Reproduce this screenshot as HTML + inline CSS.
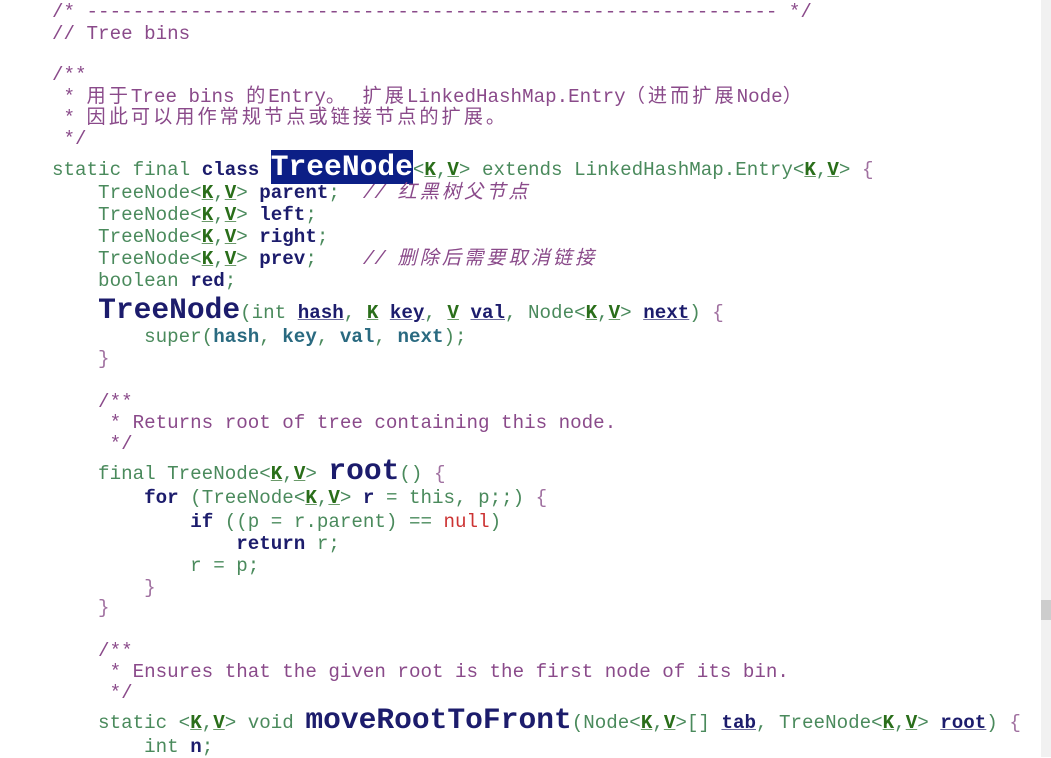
<!DOCTYPE html>
<html><head><meta charset="utf-8"><style>
html,body{margin:0;padding:0;background:#fff;}
body{width:1051px;height:757px;position:relative;overflow:hidden;font-family:"Liberation Mono","Noto Sans CJK SC",monospace;font-size:19.2px;}
.l{position:absolute;left:52px;height:22px;line-height:22px;white-space:pre;color:#4a8a5c;}
.c{color:#8a4a8a;}
.ci{color:#8a4a8a;font-style:italic;}
.z{font-family:"Liberation Mono","Noto Sans CJK SC",monospace;letter-spacing:3px;}
.b{font-weight:bold;color:#1c1c6c;}
.kv{font-weight:bold;color:#2a6e1a;text-decoration:underline;text-decoration-color:#6a9a6a;}
.u{font-weight:bold;color:#1c1c6c;text-decoration:underline;text-decoration-color:#6a6a9a;}
.br{color:#a070a0;}
.t{font-weight:bold;color:#2a6a80;}
.big{font-weight:bold;color:#1c1c6c;font-size:29.6px;line-height:22px;}
.sel{background:#0c1f86;color:#fff;}
.nul{color:#cc3333;}
.sb{position:absolute;right:0;top:0;width:10px;height:757px;background:#f1f1f1;}
.th{position:absolute;right:0;top:600px;width:10px;height:20px;background:#cdcdcd;}
</style></head><body>
<div class="l c" style="top:1px">/* ------------------------------------------------------------ */</div>
<div class="l c" style="top:23px">// Tree bins</div>
<div class="l c" style="top:64px">/**</div>
<div class="l c" style="top:86px"> * <span class="z">用于</span>Tree bins <span class="z">的</span>Entry<span class="z">。 扩展</span>LinkedHashMap.Entry<span class="z">（进而扩展</span>Node<span class="z">）</span></div>
<div class="l c" style="top:107px"> * <span class="z">因此可以用作常规节点或链接节点的扩展。</span></div>
<div class="l c" style="top:128px"> */</div>
<div class="l" style="top:156px">static final <span class="b">class</span> <span class="big sel">TreeNode</span>&lt;<span class="kv">K</span>,<span class="kv">V</span>&gt; extends LinkedHashMap.Entry&lt;<span class="kv">K</span>,<span class="kv">V</span>&gt; <span class="br">{</span></div>
<div class="l" style="top:182px">    TreeNode&lt;<span class="kv">K</span>,<span class="kv">V</span>&gt; <span class="b">parent</span>;  <span class="ci">// <span class="z">红黑树父节点</span></span></div>
<div class="l" style="top:204px">    TreeNode&lt;<span class="kv">K</span>,<span class="kv">V</span>&gt; <span class="b">left</span>;</div>
<div class="l" style="top:226px">    TreeNode&lt;<span class="kv">K</span>,<span class="kv">V</span>&gt; <span class="b">right</span>;</div>
<div class="l" style="top:248px">    TreeNode&lt;<span class="kv">K</span>,<span class="kv">V</span>&gt; <span class="b">prev</span>;    <span class="ci">// <span class="z">删除后需要取消链接</span></span></div>
<div class="l" style="top:270px">    boolean <span class="b">red</span>;</div>
<div class="l" style="top:299px">    <span class="big">TreeNode</span>(int <span class="u">hash</span>, <span class="kv">K</span> <span class="u">key</span>, <span class="kv">V</span> <span class="u">val</span>, Node&lt;<span class="kv">K</span>,<span class="kv">V</span>&gt; <span class="u">next</span>) <span class="br">{</span></div>
<div class="l" style="top:326px">        super(<span class="t">hash</span>, <span class="t">key</span>, <span class="t">val</span>, <span class="t">next</span>);</div>
<div class="l br" style="top:348px">    }</div>
<div class="l c" style="top:391px">    /**</div>
<div class="l c" style="top:412px">     * Returns root of tree containing this node.</div>
<div class="l c" style="top:433px">     */</div>
<div class="l" style="top:460px">    final TreeNode&lt;<span class="kv">K</span>,<span class="kv">V</span>&gt; <span class="big">root</span>() <span class="br">{</span></div>
<div class="l" style="top:487px">        <span class="b">for</span> (TreeNode&lt;<span class="kv">K</span>,<span class="kv">V</span>&gt; <span class="b">r</span> = this, p;;) <span class="br">{</span></div>
<div class="l" style="top:511px">            <span class="b">if</span> ((p = r.parent) == <span class="nul">null</span>)</div>
<div class="l" style="top:533px">                <span class="b">return</span> r;</div>
<div class="l" style="top:555px">            r = p;</div>
<div class="l br" style="top:577px">        }</div>
<div class="l br" style="top:597px">    }</div>
<div class="l c" style="top:640px">    /**</div>
<div class="l c" style="top:661px">     * Ensures that the given root is the first node of its bin.</div>
<div class="l c" style="top:682px">     */</div>
<div class="l" style="top:709px">    static &lt;<span class="kv">K</span>,<span class="kv">V</span>&gt; void <span class="big">moveRootToFront</span>(Node&lt;<span class="kv">K</span>,<span class="kv">V</span>&gt;[] <span class="u">tab</span>, TreeNode&lt;<span class="kv">K</span>,<span class="kv">V</span>&gt; <span class="u">root</span>) <span class="br">{</span></div>
<div class="l" style="top:736px">        int <span class="b">n</span>;</div>
<div class="sb"></div><div class="th"></div>
</body></html>
